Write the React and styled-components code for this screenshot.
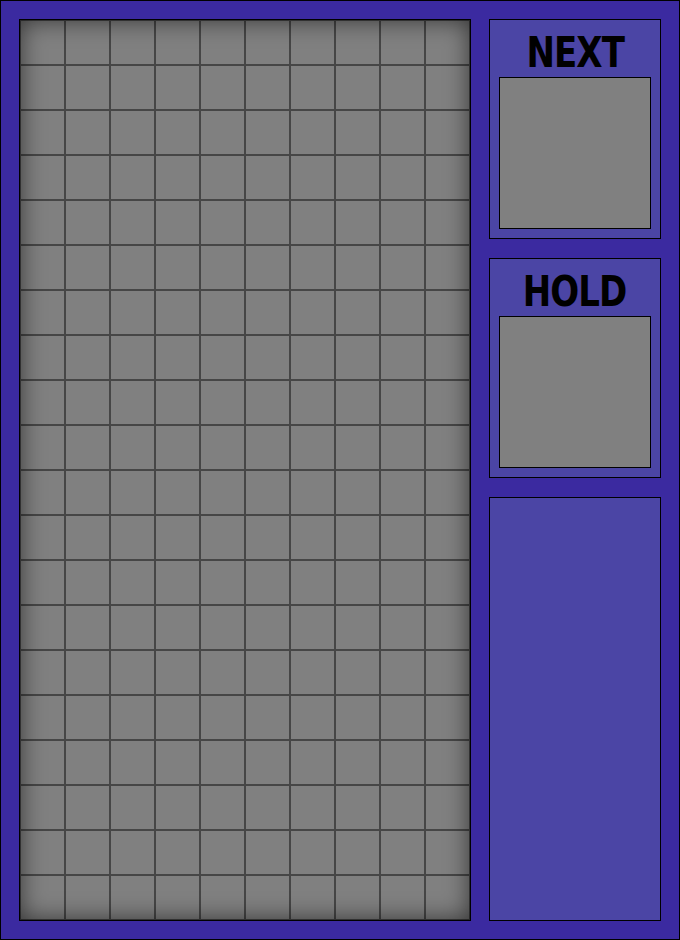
import styled, { createGlobalStyle } from "styled-components";

const Global = createGlobalStyle`
  html, body {
    margin: 0;
    padding: 0;
  }
  body {
    font-family: "DejaVu Sans Condensed", "DejaVu Sans", sans-serif;
  }
`;

// whole frame
const Frame = styled.div`
  box-sizing: border-box;
  width: 680px;
  height: 940px;
  border: 1px solid #000;
  background: #3b2aa0;
  padding: 18px;
  display: flex;
  gap: 18px;
`;

const Board = styled.div`
  box-sizing: border-box;
  width: 452px;
  height: 902px;
  border: 1px solid #000;
  background: #808080;
  display: grid;
  grid-template-columns: repeat(${(props) => props.cols}, 45px);
  grid-template-rows: repeat(${(props) => props.rows}, 45px);
  position: relative;

  /* inset shade over the cells */
  &::after {
    content: "";
    position: absolute;
    inset: 0;
    box-shadow: inset 0 0 24px rgba(0, 0, 0, 0.62);
    pointer-events: none;
  }
`;

const Cell = styled.div`
  box-sizing: border-box;
  border: 1px solid rgba(0, 0, 0, 0.45);
`;

const Side = styled.div`
  display: flex;
  flex-direction: column;
  gap: 19px;
  width: 172px;
`;

const Panel = styled.div`
  box-sizing: border-box;
  width: 172px;
  height: ${(props) => (props.fill ? "auto" : "220px")};
  flex: ${(props) => (props.fill ? 1 : "none")};
  border: 1px solid #000;
  background: #4b45a5;
  padding: 9px;
  display: flex;
  flex-direction: column;
  align-items: center;
`;

const Title = styled.div`
  height: 48px;
  font-size: 42px;
  font-weight: bold;
  line-height: 48px;
  color: #000;
  letter-spacing: -1px;
  transform: scaleX(0.9);
`;

const Preview = styled.div`
  box-sizing: border-box;
  width: 152px;
  height: 152px;
  border: 1px solid #000;
  background: #808080;
`;

const COLS = 10;
const ROWS = 20;

function App() {
  const cells = Array.from({ length: COLS * ROWS });
  return (
    <>
      <Global />
      <Frame>
        <Board cols={COLS} rows={ROWS}>
          {cells.map((_, i) => (
            <Cell key={i} />
          ))}
        </Board>
        <Side>
          <Panel>
            <Title>NEXT</Title>
            <Preview />
          </Panel>
          <Panel>
            <Title>HOLD</Title>
            <Preview />
          </Panel>
          <Panel fill />
        </Side>
      </Frame>
    </>
  );
}

export default App;
